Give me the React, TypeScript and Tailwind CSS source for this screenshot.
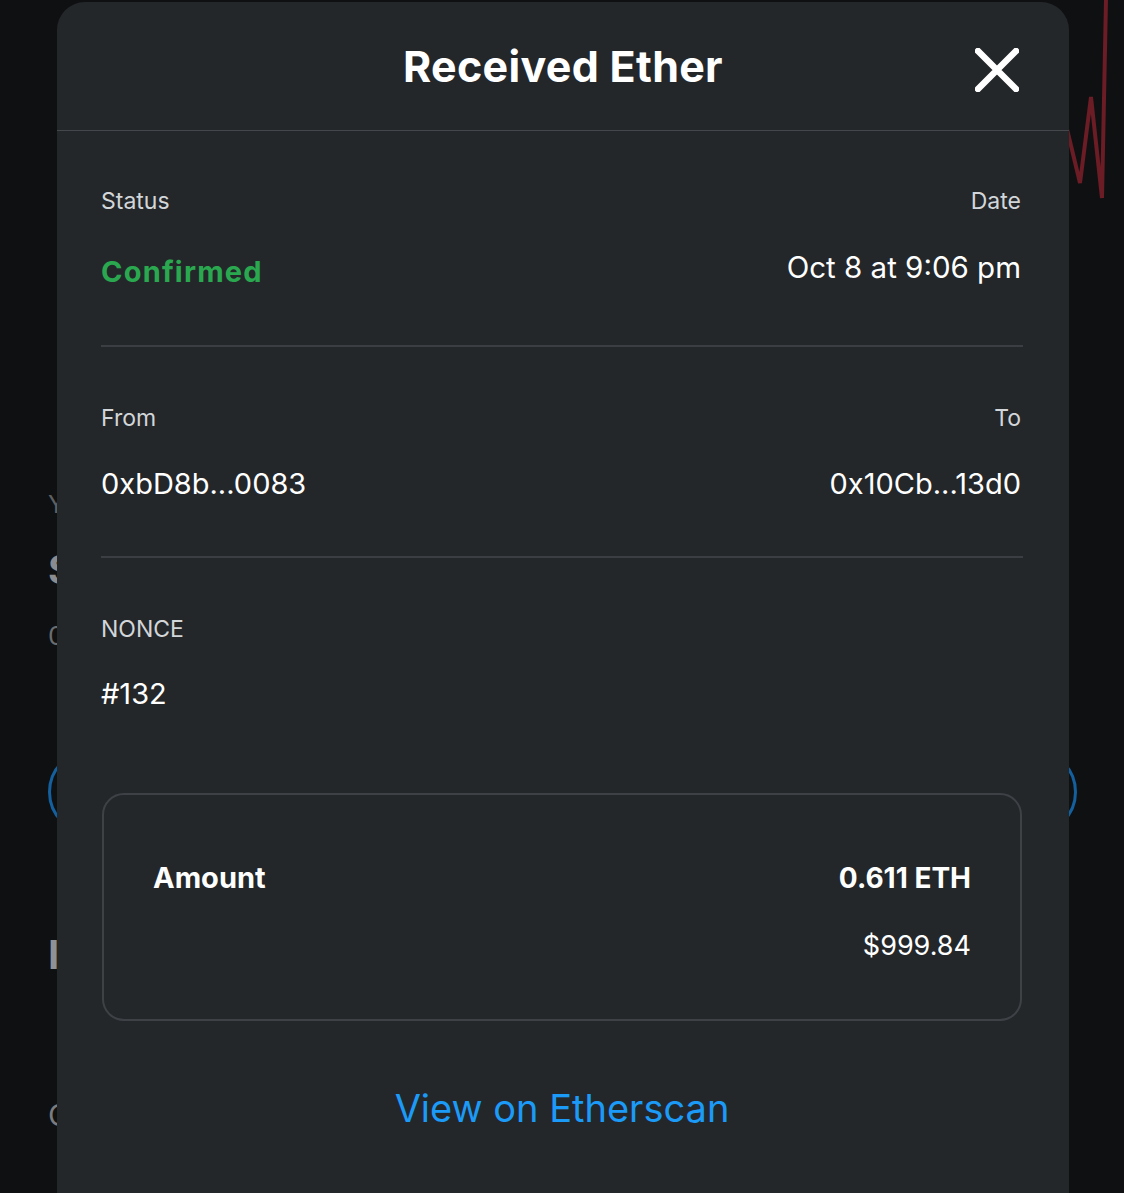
import React from "react";

export default function App() {
  const font = { fontFamily: "Inter, 'Noto Sans', sans-serif" };
  return (
    <div className="relative w-[1124px] h-[1193px] overflow-hidden bg-[#0f1012]" style={font}>
      {/* background page */}
      <div className="flex flex-col pl-[48px] pr-[47px] pt-[488px]">
        <div className="h-[34px] text-[24px] leading-[34px] text-[#5d6063]">Y</div>
        <div className="mt-[26px] h-[44px] text-[40px] leading-[44px] font-bold text-[#8a8c8f]">$</div>
        <div className="mt-[27px] h-[34px] text-[26px] leading-[34px] text-[#6a6d70]">0</div>
        <div className="mt-[96px] h-[86px] rounded-full border-[3px] border-[#14609f]" />
        <div className="mt-[100px] h-[40px] text-[40px] leading-[40px] font-bold text-[#8f9194]">I</div>
        <div className="mt-[123px] h-[34px] text-[30px] leading-[34px] text-[#7a7c80]">O</div>
      </div>
      <svg className="absolute left-[1040px] top-0" width="84" height="220" viewBox="0 0 84 220">
        <polyline
          points="20,100 40,183 51,97 62,198 66,0"
          fill="none"
          stroke="#6b1c25"
          strokeWidth="4"
          strokeLinejoin="miter"
        />
      </svg>

      {/* modal */}
      <div className="absolute left-[57px] top-[2px] w-[1012px] h-[1260px] rounded-[28px] bg-[#24272a] flex flex-col">
        <div className="relative h-[129px] flex items-center justify-center border-b border-[#44474b]">
          <div className="text-[43px] font-bold text-white tracking-[0.3px]">Received Ether</div>
          <button className="absolute right-[50px] top-[46px] w-[44px] h-[44px] flex items-center justify-center">
            <svg width="44" height="44" viewBox="0 0 44 44">
              <path d="M3 3 L41 41 M41 3 L3 41" stroke="#ffffff" strokeWidth="6.5" strokeLinecap="round" />
            </svg>
          </button>
        </div>

        <div className="pl-[44px] pr-[46px] flex flex-col">
          {/* status/date */}
          <div className="mt-[55px] h-[30px] flex justify-between items-center text-[23px] text-[#d3d6d9] pr-[2px]">
            <span>Status</span>
            <span>Date</span>
          </div>
          <div className="mt-[36px] h-[40px] flex justify-between items-start pr-[2px]">
            <span className="text-[29px] leading-[40px] font-bold text-[#2aa84f] tracking-[1.2px]">Confirmed</span>
            <span className="text-[29.5px] leading-[30px] text-white">Oct 8 at 9:06 pm</span>
          </div>
          <div className="mt-[53px] h-[2px] bg-[#3b3e42]" />

          {/* from/to */}
          <div className="mt-[56px] h-[30px] flex justify-between items-center text-[23px] text-[#d3d6d9] pr-[2px]">
            <span>From</span>
            <span>To</span>
          </div>
          <div className="mt-[31px] h-[40px] flex justify-between items-center text-[29px] text-white pr-[2px]">
            <span>0xbD8b...0083</span>
            <span>0x10Cb...13d0</span>
          </div>
          <div className="mt-[52px] h-[2px] bg-[#3b3e42]" />

          {/* nonce */}
          <div className="mt-[56px] h-[30px] flex items-center text-[23px] text-[#d3d6d9]">NONCE</div>
          <div className="mt-[30px] h-[40px] flex items-center text-[29px] text-white">#132</div>

          {/* amount box */}
          <div className="mt-[79px] h-[228px] ml-[1px] mr-[1px] rounded-[22px] border-2 border-[#3e4246] px-[49px] pt-[63px] flex flex-col">
            <div className="h-[40px] flex justify-between items-center text-[28px] font-bold text-white">
              <span className="text-[29px]">Amount</span>
              <span>0.611 ETH</span>
            </div>
            <div className="mt-[28px] h-[40px] flex justify-end items-center text-[27px] text-white">$999.84</div>
          </div>

          <div className="mt-[62px] h-[50px] flex justify-center items-center">
            <a className="text-[38px] text-[#1b9af7]">View on Etherscan</a>
          </div>
        </div>
      </div>
    </div>
  );
}
